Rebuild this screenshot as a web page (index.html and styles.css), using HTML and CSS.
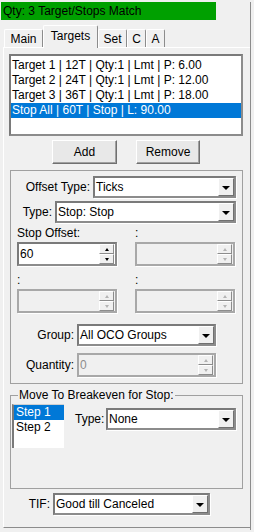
FILE: index.html
```html
<!DOCTYPE html>
<html lang="en">
<head>
  <meta charset="UTF-8">
  <title>Targets</title>
  <link rel="stylesheet" href="styles.css">
</head>
<body>
  <div class="frame">
    <div class="status">Qty: 3 Target/Stops Match</div>

    <!-- tab strip -->
    <div class="tabs">
      <div class="tab t-main">Main</div>
      <div class="tab t-targets active">Targets</div>
      <div class="tab t-set">Set</div>
      <div class="tab t-c">C</div>
      <div class="tab t-a">A</div>
    </div>

    <div class="panel">
      <div class="listbox targets">
        <div class="item">Target 1 | 12T | Qty:1 | Lmt | P: 6.00</div>
        <div class="item">Target 2 | 24T | Qty:1 | Lmt | P: 12.00</div>
        <div class="item">Target 3 | 36T | Qty:1 | Lmt | P: 18.00</div>
        <div class="item sel">Stop All | 60T | Stop | L: 90.00</div>
      </div>

      <div class="buttons">
        <button class="btn-add">Add</button>
        <button class="btn-remove">Remove</button>
      </div>

      <!-- offset settings -->
      <div class="group offset">
        <div class="row r-offtype">
          <label class="lbl">Offset Type:</label>
          <div class="combo"><span class="val">Ticks</span><span class="drop"></span></div>
        </div>
        <div class="row r-type">
          <label class="lbl">Type:</label>
          <div class="combo"><span class="val">Stop: Stop</span><span class="drop"></span></div>
        </div>
        <div class="caps">
          <span class="cap">Stop Offset:</span>
          <span class="cap">:</span>
        </div>
        <div class="spins">
          <div class="spin"><span class="val">60</span><span class="btns"><i class="up"></i><i class="down"></i></span></div>
          <div class="spin dis"><span class="val"></span><span class="btns"><i class="up"></i><i class="down"></i></span></div>
        </div>
        <div class="caps caps2">
          <span class="cap">:</span>
          <span class="cap">:</span>
        </div>
        <div class="spins">
          <div class="spin dis"><span class="val"></span><span class="btns"><i class="up"></i><i class="down"></i></span></div>
          <div class="spin dis"><span class="val"></span><span class="btns"><i class="up"></i><i class="down"></i></span></div>
        </div>
        <div class="row r-group">
          <label class="lbl">Group:</label>
          <div class="combo"><span class="val">All OCO Groups</span><span class="drop"></span></div>
        </div>
        <div class="row r-qty">
          <label class="lbl">Quantity:</label>
          <div class="spin dis"><span class="val">0</span><span class="btns"><i class="up"></i><i class="down"></i></span></div>
        </div>
      </div>

      <!-- breakeven -->
      <fieldset class="group breakeven">
        <legend>Move To Breakeven for Stop:</legend>
        <div class="be-row">
          <div class="listbox steps">
            <div class="item sel">Step 1</div>
            <div class="item">Step 2</div>
          </div>
          <div class="row be-type">
            <label class="lbl">Type:</label>
            <div class="combo"><span class="val">None</span><span class="drop"></span></div>
          </div>
        </div>
      </fieldset>

      <div class="row r-tif">
        <label class="lbl">TIF:</label>
        <div class="combo"><span class="val">Good till Canceled</span><span class="drop"></span></div>
      </div>
    </div>
  </div>
</body>
</html>
```

FILE: styles.css
```css
/* dialog base */
body { margin: 0; background: #f0f0f0; font: 12px "Liberation Sans", Arial, sans-serif; color: #000; }
.frame { width: 251px; height: 528px; border-right: 1px solid #8c8c8c; box-sizing: border-box; }
.status { margin: 2px 0 0 1px; width: 215px; height: 18px; line-height: 18px; padding-left: 2px; box-sizing: border-box; background: #00a000; }

/* tabs */
.tabs { display: flex; align-items: flex-end; height: 22px; margin: 5px 0 0 4px; position: relative; z-index: 1; }
.tab { height: 18px; line-height: 19px; text-align: center; box-sizing: border-box; border: 1px solid #fff; border-right-color: #8c8c8c; border-bottom: none; border-radius: 2px 2px 0 0; background: #f0f0f0; }
.tab.active { height: 23px; line-height: 21px; margin-bottom: -1px; }
.t-main { width: 39px; }
.t-targets { width: 55px; }
.t-set { width: 29px; }
.t-c { width: 19px; }
.t-a { width: 19px; }

.panel { margin-left: 3px; width: 247px; height: 481px; box-sizing: border-box; border-left: 1px solid #fff; border-top: 1px solid #fff; border-bottom: 1px solid #8c8c8c; }

/* list boxes */
.listbox { box-sizing: border-box; background: #fff; border: 2px solid #8c8c8c; border-top-color: #7a7a7a; border-left-color: #7a7a7a; }
.listbox .item { height: 15px; line-height: 15px; padding-left: 1px; white-space: nowrap; }
.listbox .item.sel { background: #0078d7; color: #fff; }
.targets { margin: 6px 0 0 5px; width: 234px; height: 82px; padding-top: 2px; }
.steps { margin: 2px 0 0 1px; width: 52px; height: 44px; border-right: none; border-bottom: none; border-top: 1px solid #d0d0d0; }
.steps .item { padding-left: 2px; }

/* buttons */
.buttons { display: flex; gap: 19px; margin: 4px 0 0 48px; }
.buttons button { height: 24px; padding: 0; font: inherit; color: #000; background: #e8e8e8; border: 1px solid; border-color: #fff #707070 #707070 #fff; box-shadow: inset -1px -1px #a0a0a0; }
.btn-add { width: 65px; }
.btn-remove { width: 64px; }

/* group boxes */
.group { box-sizing: border-box; border: 1px solid #a0a0a0; margin: 6px 0 0 6px; width: 233px; }
.offset { height: 214px; }
.row { display: flex; align-items: center; }
.lbl { text-align: right; margin-right: 3px; white-space: nowrap; }

.r-offtype { margin-top: 5px; }
.r-offtype .lbl { width: 79px; }
.r-offtype .combo { width: 143px; }
.r-type { margin-top: 3px; }
.r-type .lbl { width: 41px; }
.r-type .combo { width: 181px; }

.caps { display: flex; margin: 3px 0 0 6px; height: 14px; line-height: 14px; }
.caps .cap:first-child { width: 118px; }
.caps2 { margin-top: 7px; }
.spins { display: flex; gap: 18px; margin: 2px 0 0 6px; }
.spins .spin { width: 100px; }

.r-group { margin-top: 11px; }
.r-group .lbl { width: 63px; }
.r-group .combo { width: 139px; }
.r-qty { margin-top: 7px; }
.r-qty .lbl { width: 63px; }
.r-qty .spin { width: 139px; }

/* combo boxes */
.combo { display: flex; height: 22px; box-sizing: border-box; background: #fff; border: 2px solid #8c8c8c; border-top-color: #7a7a7a; border-left-color: #7a7a7a; box-shadow: 1px 1px #fff; }
.combo .val { flex: 1; padding-left: 1px; line-height: 18px; white-space: nowrap; overflow: hidden; }
.combo .drop { width: 16px; box-sizing: border-box; background: #f0f0f0; border: 1px solid; border-color: #fff #707070 #707070 #fff; display: flex; align-items: center; justify-content: center; }
.combo .drop::after { content: ""; border-top: 4px solid #000; border-left: 4px solid transparent; border-right: 4px solid transparent; margin-top: 1px; }

/* spin boxes */
.spin { display: flex; height: 24px; box-sizing: border-box; background: #fff; border: 2px solid #8c8c8c; border-top-color: #7a7a7a; border-left-color: #7a7a7a; box-shadow: 1px 1px #fff; }
.spin .val { flex: 1; padding-left: 1px; line-height: 20px; }
.spin .btns { display: flex; flex-direction: column; width: 15px; margin-right: 1px; }
.spin .btns i { flex: 1; box-sizing: border-box; background: #f0f0f0; border: 1px solid; border-color: #fff #8c8c8c #8c8c8c #fff; display: flex; align-items: center; justify-content: center; }
.spin .up::after { content: ""; border-bottom: 3px solid #000; border-left: 2px solid transparent; border-right: 2px solid transparent; }
.spin .down::after { content: ""; border-top: 3px solid #000; border-left: 2px solid transparent; border-right: 2px solid transparent; }
.spin.dis { background: #f0f0f0; border-color: #a8a8a8; }
.spin.dis .val { color: #8d8d8d; }
.spin.dis .up::after { border-bottom-color: #b4b4b4; }
.spin.dis .down::after { border-top-color: #b4b4b4; }

/* breakeven */
.breakeven { margin-top: 4px; height: 101px; padding: 0; min-width: 0; }
.breakeven legend { margin-left: 7px; padding: 0 1px; line-height: 14px; }
.be-row { display: flex; align-items: flex-start; }
.be-type { margin: 6px 0 0 11px; }
.be-type .lbl { width: 29px; margin-right: 2px; }
.be-type .combo { width: 130px; }

.r-tif { margin-top: 4px; }
.r-tif .lbl { width: 46px; }
.r-tif .combo { width: 157px; }
```
